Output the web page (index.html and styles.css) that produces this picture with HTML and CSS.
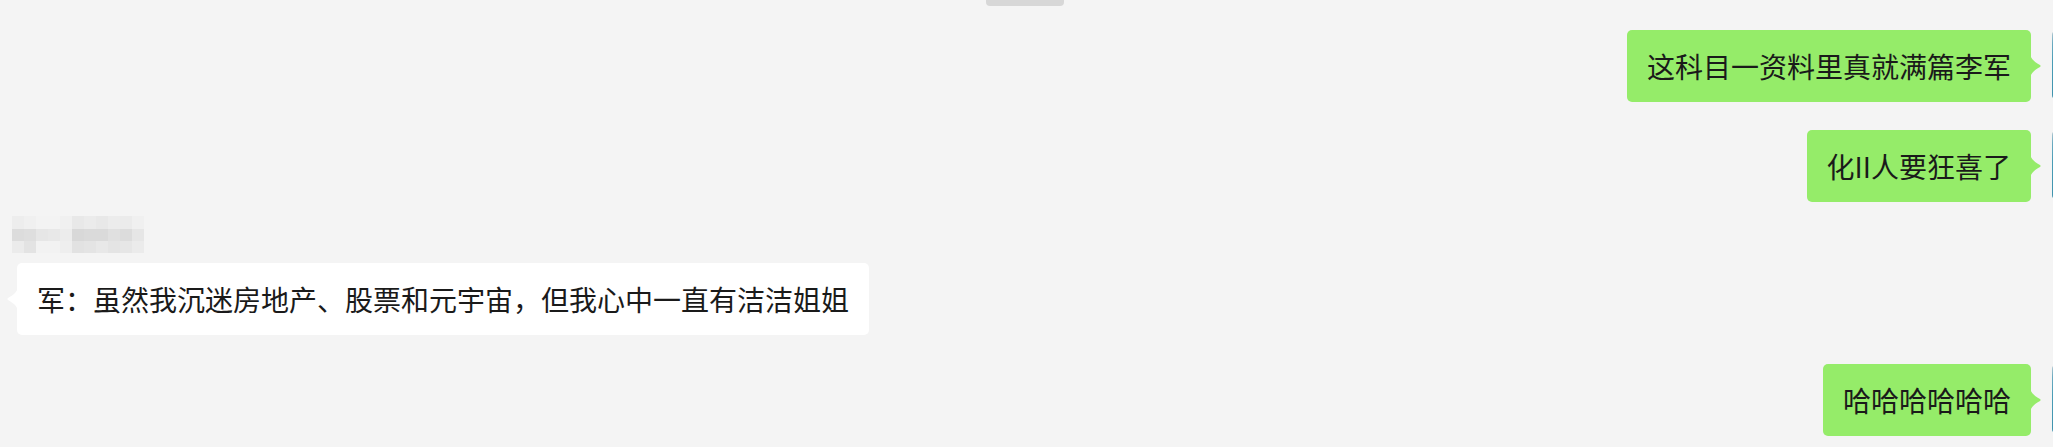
FILE: index.html
```html
<!DOCTYPE html>
<html lang="zh-CN">
<head>
<meta charset="utf-8">
<title>Chat</title>
<link rel="stylesheet" href="styles.css">
</head>
<body>
<div class="chat">
  <div class="time-pill"></div>

  <div class="row me first">
    <div class="bubble green">这科目一资料里真就满篇李军<svg class="tail tail-right" viewBox="0 0 11 28" width="11" height="28"><path d="M0 0 C0 6 3 9 10 13 Q11.2 14 10 15 C3 19 0 22 0 28 Z"/></svg></div>
    <div class="avatar"></div>
  </div>

  <div class="row me second">
    <div class="bubble green">化II人要狂喜了<svg class="tail tail-right" viewBox="0 0 11 28" width="11" height="28"><path d="M0 0 C0 6 3 9 10 13 Q11.2 14 10 15 C3 19 0 22 0 28 Z"/></svg></div>
    <div class="avatar"></div>
  </div>

  <div class="other">
    <div class="name-mosaic">
      <i class="c0"></i><i class="c1"></i><i class="c2"></i><i class="c2"></i><i class="c1"></i><i class="c3"></i><i class="c4"></i><i class="c3"></i><i class="c5"></i><i class="c4"></i><i class="c1"></i>
      <i class="d0"></i><i class="d1"></i><i class="d2"></i><i class="d3"></i><i class="d4"></i><i class="d5"></i><i class="d6"></i><i class="d6"></i><i class="d7"></i><i class="d0"></i><i class="d2"></i>
      <i class="e0"></i><i class="e1"></i><i class="e2"></i><i class="e2"></i><i class="e3"></i><i class="e4"></i><i class="e5"></i><i class="e6"></i><i class="e5"></i><i class="e7"></i><i class="e0"></i>
    </div>
    <div class="bubble white">军：虽然我沉迷房地产、股票和元宇宙，但我心中一直有洁洁姐姐<svg class="tail tail-left" viewBox="0 0 11 28" width="11" height="28"><path d="M11 0 C11 6 8 9 1 13 Q-0.2 14 1 15 C8 19 11 22 11 28 Z"/></svg></div>
  </div>

  <div class="row me fourth">
    <div class="bubble green">哈哈哈哈哈哈<svg class="tail tail-right" viewBox="0 0 11 28" width="11" height="28"><path d="M0 0 C0 6 3 9 10 13 Q11.2 14 10 15 C3 19 0 22 0 28 Z"/></svg></div>
    <div class="avatar"></div>
  </div>
</div>
</body>
</html>
```

FILE: styles.css
```css
html, body {
  margin: 0;
  padding: 0;
  background: #f4f4f4;
  overflow: hidden;
}

.chat {
  width: 2053px;
  height: 447px;
  display: flex;
  flex-direction: column;
  overflow: hidden;
  font-family: "Noto Sans CJK SC", "Microsoft YaHei", sans-serif;
  font-size: 28px;
  color: #1a1a1a;
}

.time-pill {
  align-self: center;
  width: 78px;
  height: 6px;
  margin-left: -3px;
  background: #d7d7d7;
  border-radius: 0 0 4px 4px;
}

.row {
  display: flex;
  align-items: flex-start;
}

.row.me {
  justify-content: flex-end;
  margin-right: -67px;
  gap: 20px;
}

.row.first { margin-top: 24px; }
.row.second { margin-top: 28px; }
.row.fourth { margin-top: 29px; }

.bubble {
  position: relative;
  padding: 16px 20px;
  line-height: 40px;
  border-radius: 5px;
  white-space: nowrap;
}

.bubble.green {
  background: #95ec69;
  margin-right: 1px;
}

.bubble.white {
  background: #ffffff;
  align-self: flex-start;
  margin-left: 5px;
}

.tail {
  position: absolute;
  top: 22px;
}

.tail-right {
  left: calc(100% - 1px);
  fill: #95ec69;
}

.tail-left {
  right: calc(100% - 1px);
  fill: #ffffff;
}

.avatar {
  width: 68px;
  height: 68px;
  margin-top: 1px;
  border-radius: 4px;
  background: linear-gradient(180deg, #b7c9d1 0%, #6aaac0 18%, #4a9db6 45%, #3f93ad 100%);
}

.other {
  margin-top: 14px;
  padding-left: 12px;
  display: flex;
  flex-direction: column;
  gap: 10px;
}

.name-mosaic {
  display: grid;
  grid-template-columns: repeat(11, 12px);
  grid-template-rows: 13px 12px 12px;
  width: 132px;
}

.name-mosaic i { display: block; }

.c0 { background: #ededed; }
.c1 { background: #f0f0f0; }
.c2 { background: #f3f3f3; }
.c3 { background: #e8e8e8; }
.c4 { background: #ebebeb; }
.c5 { background: #ececec; }

.d0 { background: #dcdcdc; }
.d1 { background: #dedede; }
.d2 { background: #e6e6e6; }
.d3 { background: #e8e8e8; }
.d4 { background: #ececec; }
.d5 { background: #d8d8d8; }
.d6 { background: #dadada; }
.d7 { background: #e0e0e0; }

.e0 { background: #ebebeb; }
.e1 { background: #e3e3e3; }
.e2 { background: #f2f2f2; }
.e3 { background: #eeeeee; }
.e4 { background: #e2e2e2; }
.e5 { background: #e4e4e4; }
.e6 { background: #e8e8e8; }
.e7 { background: #e6e6e6; }
```
